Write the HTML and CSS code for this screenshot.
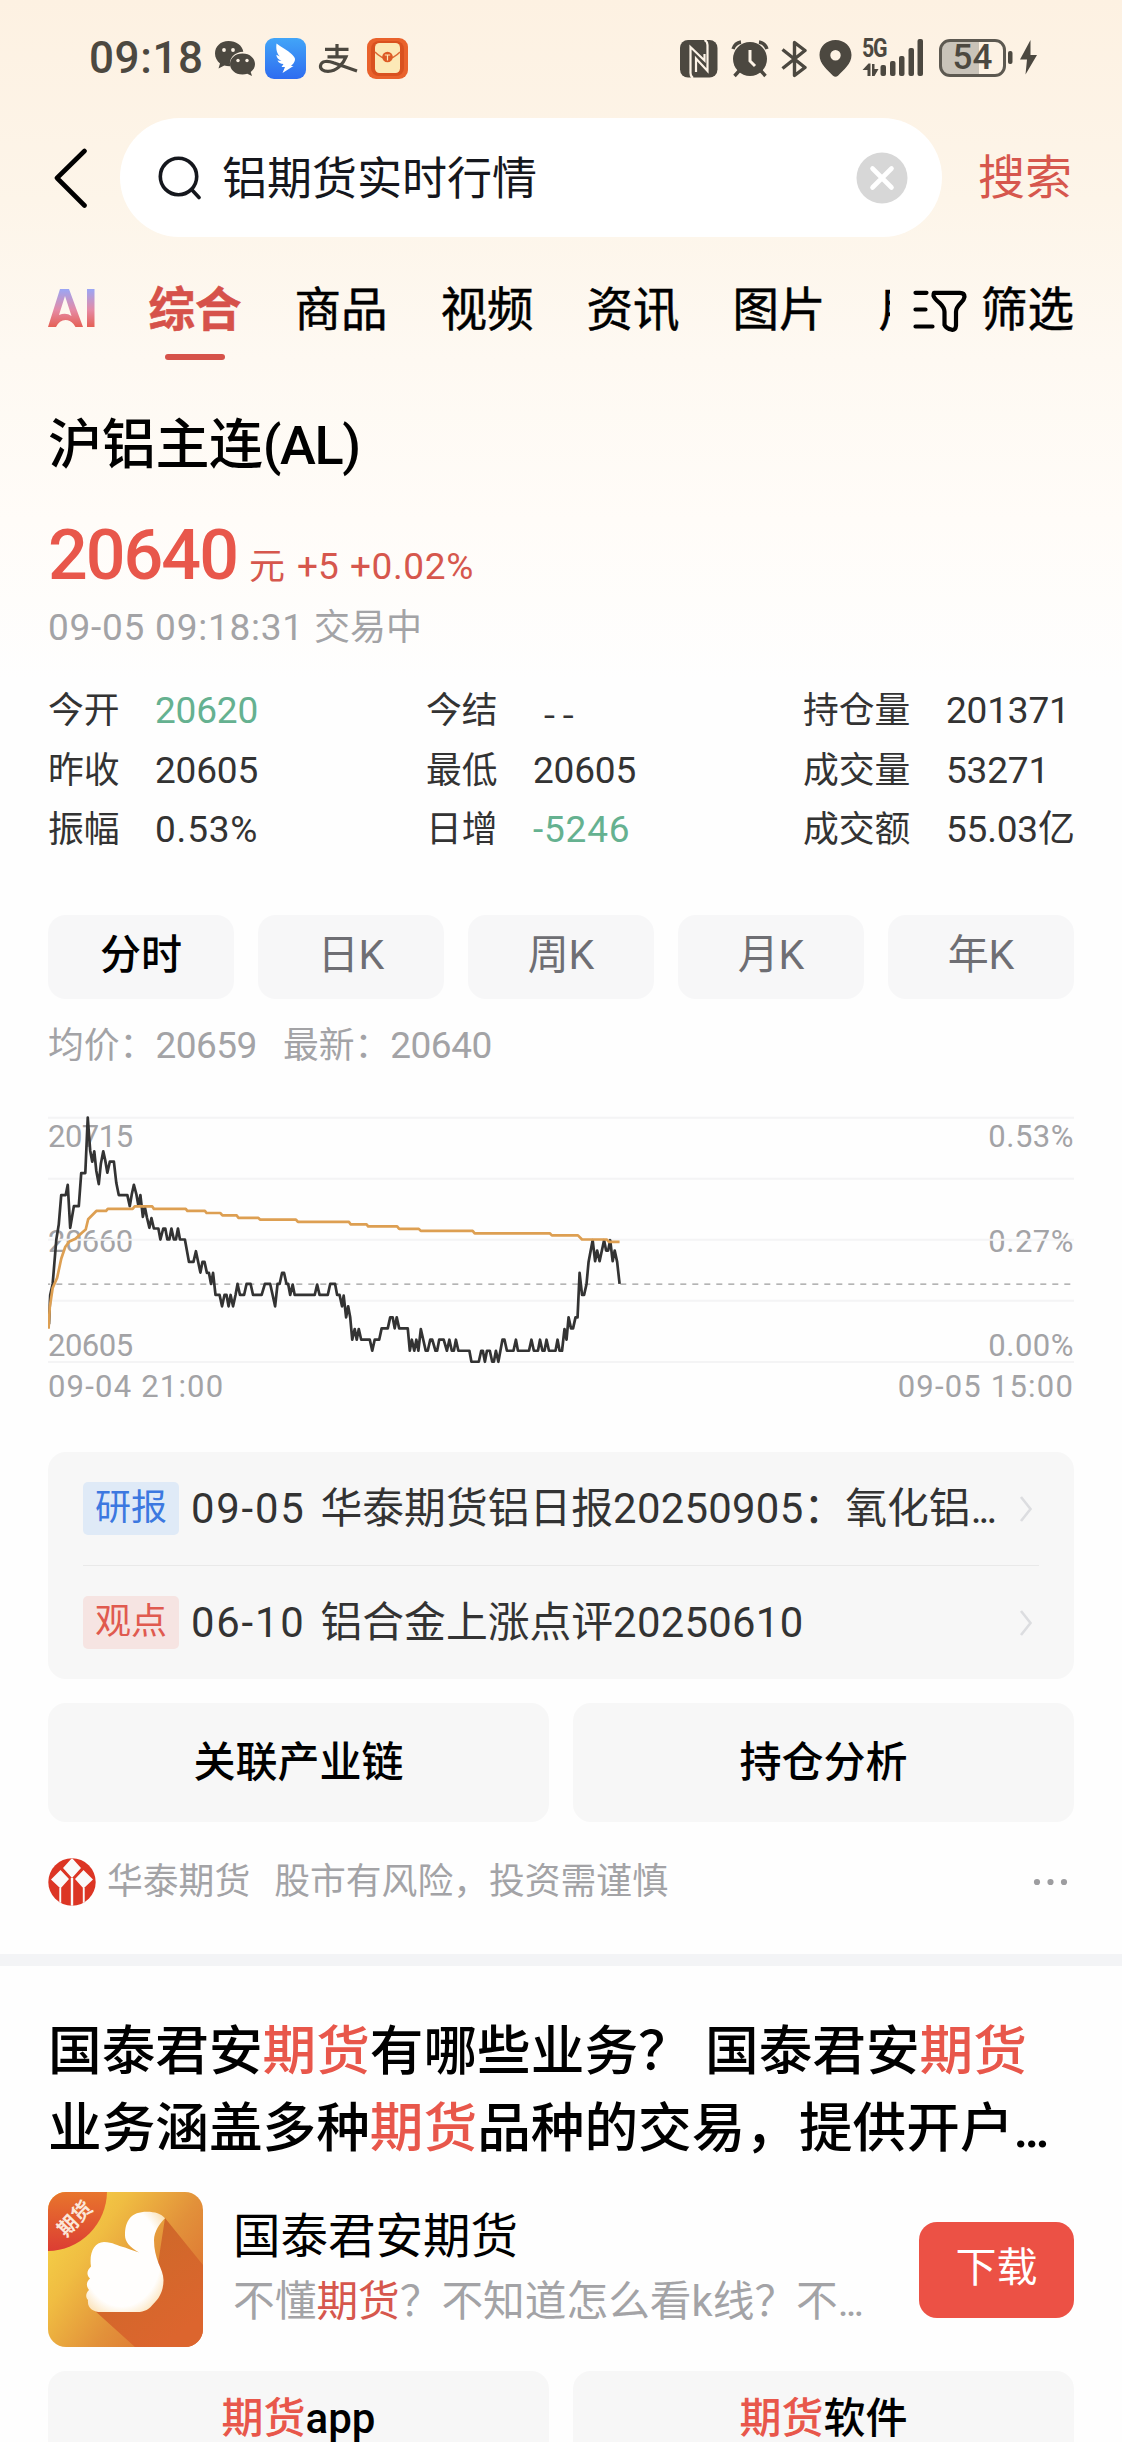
FILE: index.html
```html
<!DOCTYPE html>
<html lang="zh-CN">
<head>
<meta charset="utf-8">
<title>铝期货实时行情</title>
<link rel="stylesheet" href="styles.css">
</head>
<body>
<div class="page">
  <header class="status">
    <div class="status-left">
      <span class="clock">09:18</span>
      <svg class="ic-wechat" width="41" height="38" viewBox="215 39 41 38" fill="#4c4840">
        <path d="M228.500 41C220.500 41 215 46.500 215 53.500c0 4 2 7.500 5 10l-1.500 5 5.800-3c2 .6 4 .9 6 .8-2-8 4.500-14.500 13-14.500C242.500 45.500 236 41 228.500 41z"/>
        <path d="M242.500 53.500c-7.500 0-12.500 5-12.500 10.500s5 10.500 12.500 10.500c1.700 0 3.300-.3 4.800-.8l4.700 2.300-1.300-4c2.800-2 4.300-4.800 4.300-8 0-5.500-5-10.500-12.500-10.500z"/>
        <g fill="#fdf3e6"><circle cx="224" cy="50" r="1.900"/><circle cx="233" cy="50" r="1.900"/><circle cx="238" cy="60.500" r="1.700"/><circle cx="247" cy="60.500" r="1.700"/></g>
      </svg>
      <svg class="ic-wing" width="41" height="41" viewBox="265 38 41 41">
        <defs><linearGradient id="wing" x1="0" y1="0" x2="0" y2="1"><stop offset="0" stop-color="#42a5f8"/><stop offset="1" stop-color="#2e6cf0"/></linearGradient></defs>
        <rect x="265" y="38" width="41" height="41" rx="9" fill="url(#wing)"/>
        <path fill="#fff" d="M276.500 43.500c5 4 11 6.500 15 10.500 2 2 4 4 3.500 6-.5 2.500-2.500 4.500-4 6h2.500L282.500 73l2.500-6h-3.500l2-3c-3 0-5-1.500-6-3.500l4 .5c-3-1.500-5-3.500-5.200-6.300l3.700 1.800c-3-2.500-4.300-7-3.500-13z"/>
      </svg>
      <svg class="ic-pay" width="40" height="30" viewBox="318 43 40 30" fill="none" stroke="#4c4840" stroke-width="3.200">
        <path d="M325 49.300h23.500M337 44v12M327.500 56.800H346c-3 7.500-9.500 14.500-18 14.500-5 0-8-2.500-7.500-5.500.8-5.500 8-5 13-3L357 71"/>
      </svg>
      <svg class="ic-packet" width="41" height="41" viewBox="367 38 41 41">
        <rect x="367" y="38" width="41" height="41" rx="9" fill="#e9622c"/>
        <rect x="371" y="41" width="33" height="35" rx="8" fill="#d9511f"/>
        <rect x="375" y="43" width="25" height="30" rx="4.500" fill="#fce9b7"/>
        <path d="M375 52q12.500 13 25 0" fill="none" stroke="#dc6a35" stroke-width="1.500"/>
        <circle cx="387.500" cy="57" r="5.300" fill="#dd5a25"/>
        <path d="M384.800 55h5.400M387.500 55v5.500" stroke="#fce9b7" stroke-width="1.200"/>
      </svg>
    </div>
    <div class="status-right">
      <svg class="ic-nfc" width="38" height="38" viewBox="680 40 38 38">
        <rect x="680" y="40" width="37.500" height="37.500" rx="8" fill="#4c4840"/>
        <path d="M693 78q-2.500-1.500-2.500-5V47l14 13.500V54M704.500 40q3 1.500 3 5v26L696 58.500V72" fill="none" stroke="#fdf3e6" stroke-width="2.200"/>
      </svg>
      <svg class="ic-alarm" width="38" height="38" viewBox="731 40 38 38" fill="none" stroke="#4c4840" stroke-width="3.400">
        <circle cx="750" cy="59" r="17" fill="#4c4840" stroke="none"/>
        <path d="M733 49q2-6 8-7M767 49q-2-6-8-7M739 71l-4.500 5M761 71l4.500 5"/>
        <path d="M750 50v11l5 5" stroke="#fdf3e6" stroke-width="3"/>
      </svg>
      <svg class="ic-bt" width="26" height="38" viewBox="781 40 26 38" fill="none" stroke="#4c4840" stroke-width="3.400" stroke-linejoin="round">
        <path d="M782.500 49.500L805 67.500l-10.500 8V42.500l10.500 8-22.500 18"/>
      </svg>
      <svg class="ic-pin" width="33" height="37" viewBox="818.500 40 33 37" fill="#4c4840" fill-rule="evenodd">
        <path d="M835 40c-9 0-16 6.500-16 15 0 9 8 15 13.500 20.700q2.500 2 5 0C843 70 851 64 851 55c0-8.500-7-15-16-15zm0 10a5.200 5.200 0 1 1 0 10.400 5.200 5.200 0 0 1 0-10.400z"/>
      </svg>
      <div class="signal">
        <span class="net">5G</span>
        <svg width="62" height="39" viewBox="862 38 62 39" fill="#4c4840">
          <path d="M862.500 70l6-6.500h2V76h-3v-6zM872 64h2.500v5h4l-4 7H872z"/>
          <rect x="880.500" y="65" width="5.500" height="11" rx="2"/><rect x="890" y="61" width="5.500" height="15" rx="2"/><rect x="899" y="56" width="5.500" height="20" rx="2"/><rect x="908.500" y="48" width="5.500" height="28" rx="2"/><rect x="917.500" y="39" width="5.500" height="37" rx="2"/>
        </svg>
      </div>
      <div class="battery"><span>54</span></div>
      <svg class="ic-bolt" width="30" height="36" viewBox="1008 39 30 36" fill="#4c4840">
        <rect x="1008" y="51" width="4.500" height="13" rx="2"/><path d="M1030.500 40L1020 59.500h7L1025.500 74.500 1037 55h-6.500z"/>
      </svg>
    </div>
  </header>

  <div class="searchbar">
    <svg class="back" width="34" height="60" viewBox="54 147 34 60" fill="none" stroke="#000" stroke-width="4.600" stroke-linecap="round" stroke-linejoin="round"><path d="M84.500 150L57 177l27.500 27.500"/></svg>
    <div class="field">
      <svg width="44" height="44" viewBox="158 155 44 44" fill="none" stroke="#15171d" stroke-width="3.600" stroke-linecap="round"><circle cx="178.500" cy="175.500" r="18.200"/><path d="M192.500 189.500l6.500 7"/></svg>
      <span class="query">铝期货实时行情</span>
      <svg class="clear" width="52" height="52" viewBox="0 0 52 52"><circle cx="26" cy="26" r="25.500" fill="#d7d7d7"/><path d="M16.500 16.500l19 19M35.500 16.500l-19 19" stroke="#fff" stroke-width="4.600" stroke-linecap="round"/></svg>
    </div>
    <span class="go">搜索</span>
  </div>

  <nav class="tabs">
    <div class="tablist">
      <svg class="ai" width="48" height="40" viewBox="48 288 48 40" aria-label="AI">
        <defs><linearGradient id="aig" x1="0" y1="0" x2="0" y2="1"><stop offset="0" stop-color="#9aa6f5"/><stop offset=".55" stop-color="#e58ba6"/><stop offset="1" stop-color="#e56055"/></linearGradient></defs>
        <path fill="url(#aig)" d="M48 327l12-38h9L83 327h-7.500l-2-3q-3.500-4-8-4-6 0-9.500 7zM59 315q7-3 12.500 1L65 296zM87 289h7.500v38H87z" fill-rule="evenodd"/>
      </svg>
      <span class="tab active">综合</span><span class="tab">商品</span><span class="tab">视频</span><span class="tab">资讯</span><span class="tab">图片</span><span class="tab">用户</span>
    </div>
    <div class="filter">
      <svg width="54" height="42" viewBox="913 290 54 42" fill="none" stroke="#000" stroke-width="4.200" stroke-linecap="round" stroke-linejoin="round"><path d="M915.500 292.800h11M915.500 309.500h10M915.500 326.500h17M934 292.800h26q4.500 0 4.500 4-.5 3-3.500 6-5 5-5 9v14q-.5 4.500-4 4-6-1.500-7.500-5v-13q0-4-5-9-5-4-6-7 0-2.500.5-3z"/></svg>
      <span>筛选</span>
    </div>
  </nav>

  <section class="quote">
    <h1>沪铝主连<span class="code">(AL)</span></h1>
    <div class="price"><b>20640</b><span class="yuan">元</span><span class="chg">+5</span><span class="pct">+0.02%</span></div>
    <div class="time"><span class="stamp">09-05 09:18:31</span><span>交易中</span></div>
    <div class="stats">
      <div class="stat"><span>今开</span><em class="down">20620</em></div><div class="stat"><span>今结</span><em class="none">--</em></div><div class="stat wide"><span>持仓量</span><em>201371</em></div>
      <div class="stat"><span>昨收</span><em>20605</em></div><div class="stat"><span>最低</span><em>20605</em></div><div class="stat wide"><span>成交量</span><em>53271</em></div>
      <div class="stat"><span>振幅</span><em class="rate">0.53%</em></div><div class="stat"><span>日增</span><em class="down rate">-5246</em></div><div class="stat wide"><span>成交额</span><em>55.03亿</em></div>
    </div>
    <div class="periods"><span class="on">分时</span><span>日K</span><span>周K</span><span>月K</span><span>年K</span></div>
    <div class="legend"><span>均价：<i>20659</i></span><span>最新：<i>20640</i></span></div>
    <div class="chart">
      <div class="scale"><span>20715</span><span>20660</span><span>20605</span></div>
      <div class="scale right"><span>0.53%</span><span>0.27%</span><span>0.00%</span></div>
      <svg width="1026" height="248" viewBox="117.600 685.300 2513.700 720.200" preserveAspectRatio="none" fill="none">
        <g stroke="#f4f4f5" stroke-width="2"><path vector-effect="non-scaling-stroke" d="M117 690.500H2632M117 867.500H2632M117 1044.500H2632M117 1222H2632M117 1399.500H2632"/></g>
        <path vector-effect="non-scaling-stroke" d="M117.600 1173.500H2632" stroke="#9c9c9c" stroke-width="1.300" stroke-dasharray="6 6" stroke-dashoffset="3.700"/>
        <path class="line" vector-effect="non-scaling-stroke" stroke="#333" d="M120 1290L123 1205 129 1173 138 1044 144 1000 150 915 161 915 166 885 172 1010 181 947 193 947 199 851 209 851 215 690 221 786 226 818 231 788 236 845 242 883 247 825 253 788 258 815 263 850 269 818 279 818 285 880 291 915 312 915 318 947 323 912 328 885 334 912 339 945 344 915 350 978 355 950 360 980 366 1010 371 982 377 1012 388 1012 393 1044 400 1012 405 1012 410 1044 415 1044 420 1012 426 1044 431 1044 436 1012 441 1044 453 1044 463 1109 474 1109 480 1078 491 1140 496 1109 501 1109 507 1141 512 1141 517 1173 522 1141 528 1205 538 1205 544 1238 550 1205 555 1205 560 1238 565 1205 571 1238 577 1205 582 1173 588 1205 598 1205 604 1173 614 1173 620 1205 641 1205 649 1173 662 1173 674 1238 680 1173 685 1173 691 1141 696 1141 702 1173 706 1173 711 1205 717 1175 722 1205 771 1205 777 1175 783 1205 803 1205 809 1173 821 1173 826 1205 832 1205 838 1238 842 1207 848 1270 853 1238 858 1270 863 1335 869 1304 874 1335 879 1304 885 1335 906 1335 912 1367 918 1335 929 1335 935 1302 950 1302 956 1270 962 1270 967 1302 972 1270 978 1302 999 1302 1004 1367 1009 1335 1015 1367 1020 1335 1025 1367 1031 1304 1037 1335 1043 1367 1048 1367 1054 1335 1059 1335 1067 1367 1071 1367 1076 1335 1087 1335 1095 1367 1101 1335 1107 1367 1112 1367 1117 1335 1123 1367 1150 1367 1155 1399 1173 1399 1179 1367 1183 1367 1188 1399 1193 1367 1200 1367 1206 1399 1210 1399 1215 1367 1221 1399 1231 1335 1236 1335 1242 1367 1258 1367 1264 1335 1269 1367 1296 1367 1302 1335 1308 1367 1318 1367 1323 1335 1329 1367 1334 1367 1339 1335 1345 1367 1361 1367 1366 1335 1371 1367 1377 1367 1383 1304 1388 1335 1393 1270 1399 1302 1404 1302 1410 1270 1415 1270 1420 1141 1426 1205 1431 1205 1437 1173 1442 1109 1452 1046 1458 1107 1463 1076 1469 1107 1480 1046 1485 1076 1490 1076 1495 1046 1501 1107 1506 1076 1512 1109 1518 1173"/>
        <path class="line" vector-effect="non-scaling-stroke" stroke="#dd9f52" d="M119 1303L122 1240 129 1185 140 1155 150 1100 160 1065 170 1050 185 1042 200 1025 210 1015 216 985 236 961 260 961 264 955 325 955 330 948 373 948 377 955 455 955 459 961 502 961 506 967 540 967 545 974 580 974 584 981 633 981 637 986 725 986 730 993 855 993 859 1000 898 1000 902 1006 973 1006 978 1013 1026 1013 1031 1019 1158 1019 1163 1026 1347 1026 1352 1032 1416 1032 1426 1044 1487 1044 1492 1051 1518 1051"/>
      </svg>
    </div>
    <div class="axis"><span>09-04 21:00</span><span>09-05 15:00</span></div>
    <div class="reports">
      <div class="report"><span class="tag blue">研报</span><p><i class="d">09-05</i>华泰期货铝日报<i>20250905</i>：氧化铝<i class="dots">...</i></p><svg width="14" height="28" viewBox="0 0 14 28"><path d="M2 2l9.500 12L2 26"/></svg></div>
      <div class="report"><span class="tag red">观点</span><p><i class="d">06-10</i>铝合金上涨点评<i>20250610</i></p><svg width="14" height="28" viewBox="0 0 14 28"><path d="M2 2l9.500 12L2 26"/></svg></div>
    </div>
    <div class="pair"><span>关联产业链</span><span>持仓分析</span></div>
    <div class="source">
      <svg class="logo" width="48" height="48" viewBox="0 0 48 48"><defs><clipPath id="lc"><circle cx="24" cy="24" r="23.700"/></clipPath></defs><g clip-path="url(#lc)"><path fill="#dc3524" d="M0 0h48v48H0z"/><g fill="#fafafa"><path d="M24 0l9 10-9 10-9-10zM12.500 12l8.500 9-8.500 9.500L3 21.500zM35.500 12l9.500 9.500-9.500 9L27 21z"/><path d="M22.800 20h2.400v28h-2.400zM11.300 30h1.900v18h-1.900zM34.800 30h1.900v18h-1.900z"/></g></g></svg>
      <span class="org">华泰期货</span><span>股市有风险，投资需谨慎</span>
      <svg class="more" width="36" height="8" viewBox="0 0 36 8" fill="#9d9da0"><circle cx="5" cy="4" r="3.100"/><circle cx="18.500" cy="4" r="3.100"/><circle cx="32" cy="4" r="3.100"/></svg>
    </div>
  </section>

  <section class="promo">
    <h2>国泰君安<mark>期货</mark>有哪些业务？<span class="sp"> </span>国泰君安<mark>期货</mark><br>业务涵盖多种<mark>期货</mark>品种的交易，提供开户<span class="dots">...</span></h2>
    <div class="app">
      <svg class="appicon" width="155" height="155" viewBox="0 0 155 155">
        <defs>
          <linearGradient id="ag" x1="0" y1=".15" x2="1" y2=".85"><stop offset="0" stop-color="#f6d448"/><stop offset=".28" stop-color="#f0bd42"/><stop offset=".6" stop-color="#e2913a"/><stop offset="1" stop-color="#dd6a30"/></linearGradient>
          <linearGradient id="sh" x1="0" y1="0" x2=".6" y2="1"><stop offset="0" stop-color="#c96a27"/><stop offset="1" stop-color="#dc652e"/></linearGradient>
          <linearGradient id="bd" x1="0" y1="0" x2="0" y2="1"><stop offset=".5" stop-color="#e8762c"/><stop offset="1" stop-color="#dc3d33"/></linearGradient>
          <radialGradient id="th" cx=".45" cy=".45" r=".66"><stop offset=".75" stop-color="#fffefd"/><stop offset="1" stop-color="#fbe2b8"/></radialGradient>
          <clipPath id="ac"><rect width="155" height="155" rx="18"/></clipPath>
        </defs>
        <g clip-path="url(#ac)">
          <path fill="url(#ag)" d="M0 0h155v155H0z"/>
          <path fill="url(#sh)" d="M117 26l38 47v82H87L46 118l60-20z"/>
          <circle cx="-1" cy="-1" r="60" fill="url(#bd)"/>
          <path fill="url(#th)" d="M99 19.700c8 0 14 2 18 6.500-5 5-11 13-11 22 0 9 2 16 4.500 23 2.500 6 5 11 5 17 0 10-4 18-9.500 23-5 6-9 8.800-17 8.800H53c-8 0-14-4-13-12-3-3-2-7 1-10-3-4-3-8 1-11.500-4-4-3-8 1-12-2-13 3-24.500 13-24.500 9 0 13 4 21 5.500 4 1.500 9 3.500 14 5-9-5-14-11-14-17 0-15 6-23.800 22-23.800z"/>
          <text x="0" y="0" transform="translate(18 46) rotate(-46)" class="ribbon">期货</text>
        </g>
      </svg>
      <div class="info"><div class="name">国泰君安期货</div><div class="desc">不懂<mark>期货</mark>？不知道怎么看k线？不<span class="dots">...</span></div></div>
      <span class="download">下载</span>
    </div>
    <div class="pair links"><span><mark>期货</mark>app</span><span><mark>期货</mark>软件</span></div>
  </section>
</div>
</body>
</html>
```
FILE: styles.css
```css
* { box-sizing: border-box; margin: 0; padding: 0; }
html, body { height: 2442px; overflow: hidden; }
body { font-family: Roboto, "Noto Sans CJK SC", sans-serif; color: #000; background: #fefefe; }
svg { display: block; flex: none; }
i, em { font-style: normal; }
mark { background: none; color: #e8574b; }
.page {
  width: 1122px; height: 2442px; overflow: hidden; white-space: nowrap;
  background: linear-gradient(#fdf1e2 0, #fdf5e9 200px, #fef9f2 360px, #fffcf8 520px, #fefefe 680px);
}

.status { height: 118px; display: flex; justify-content: space-between; padding: 38px 84px 0 89px; }
.status-left, .status-right { display: flex; align-items: flex-start; }
.clock { width: 114px; font-size: 44px; font-weight: 500; line-height: 41px; letter-spacing: 0.6px; color: #4c4840; }
.ic-wechat { margin: 1px 9px 0 12px; }
.ic-pay { margin: 5px 9px 0 12px; }
.ic-nfc { margin: 2px 13px 0 0; }
.ic-alarm { margin: 2px 12px 0 0; }
.ic-bt { margin: 2px 11.500px 0 0; }
.ic-pin { margin: 2px 10.500px 0 0; }
.signal { position: relative; margin-right: 15px; }
.net { position: absolute; left: 0; top: 0; font-size: 26px; line-height: 20px; font-weight: 700; letter-spacing: -1.500px; transform: scaleX(.82); transform-origin: left; color: #4c4840; }
.battery { width: 67px; height: 38px; margin: 1px 2px 0 0; border: 3.500px solid #5d5951; border-radius: 11px; background: linear-gradient(90deg, #c9c3b9 60%, transparent 60%); text-align: center; font-size: 35px; line-height: 31px; font-weight: 500; color: #4c4840; }
.ic-bolt { margin-top: 1px; }

.searchbar { height: 119px; display: flex; align-items: center; padding-left: 54px; }
.field { width: 822px; height: 119px; margin-left: 32px; border-radius: 60px; background: #fff; display: flex; align-items: center; padding: 0 34px 0 38px; }
.query { flex: 1; margin-left: 20px; font-size: 45px; line-height: 60px; padding-top: 4px; color: #15171d; }
.go { margin-left: 36px; font-size: 47px; line-height: 60px; color: #d6574d; }

.tabs { height: 145px; display: flex; padding: 37px 48px 0 48px; font-size: 46.500px; line-height: 72px; }
.tablist { width: 842px; flex: none; display: flex; overflow: hidden; }
.ai { margin: 14px 52.500px 0 0; }
.tab { position: relative; width: 93px; margin-right: 53px; flex: none; -webkit-text-stroke: .5px currentColor; }
.active { color: #d6524a; font-weight: 700; }
.active::after { content: ""; position: absolute; left: 16px; top: 80px; width: 60px; height: 6px; border-radius: 3px; background: #d6524a; }
.filter { display: flex; margin-left: 23px; gap: 14px; -webkit-text-stroke: .5px currentColor; }
.filter svg { margin-top: 16px; }

.quote { padding: 0 48px; }
h1 { font-size: 54px; line-height: 80px; font-weight: 500; padding-top: 24px; letter-spacing: -.3px; }
.code { letter-spacing: -1.400px; }
.price { display: flex; align-items: baseline; height: 80px; margin-top: 29px; line-height: 80px; color: #d6574d; font-size: 37px; }
.price b { font-size: 70px; font-weight: 500; letter-spacing: -2px; color: #e8574b; width: 201px; }
.yuan { width: 48px; font-size: 36px; }
.chg { width: 53px; }
.pct { letter-spacing: .6px; }
.time { display: flex; gap: 14px; height: 44px; line-height: 44px; margin-top: 11px; font-size: 36px; color: #a3a3a6; }
.stamp { font-size: 37px; letter-spacing: .75px; width: 252px; }
.stats { display: grid; grid-template-columns: 378px 377px 271px; grid-auto-rows: 59.700px; line-height: 60px; margin-top: 31px; font-size: 35.800px; color: #333; }
.stat { display: flex; }
.stat span { width: 107px; flex: none; }
.stat.wide span { width: 143px; }
.stat em { font-size: 37px; letter-spacing: -.2px; }
.stat .rate { letter-spacing: .8px; }
.stat .down { color: #65b190; }
.stat .none { padding-left: 10px; letter-spacing: 6px; font-family: "Noto Sans CJK SC", sans-serif; }
.periods { display: grid; grid-template-columns: repeat(5, 1fr); gap: 24px; margin-top: 55px; }
.periods span { height: 84px; border-radius: 18px; background: #f7f7f8; text-align: center; line-height: 80px; font-size: 41px; color: #6e6e73; }
.periods .on { color: #000; font-weight: 500; }
.legend { display: flex; gap: 26px; height: 50px; line-height: 50px; margin-top: 22px; font-size: 35.800px; color: #a3a3a6; }
.legend i { font-size: 37px; letter-spacing: -.5px; }
.chart { position: relative; height: 248px; margin-top: 45px; }
.chart svg { position: relative; }
.line { stroke-width: 2.700px; stroke-linejoin: round; }
.scale { position: absolute; inset: 0 auto 0 0; padding: 3px 0 0; display: flex; flex-direction: column; justify-content: space-between; font-size: 31px; line-height: 36px; letter-spacing: -.5px; color: #a3a3a6; }
.scale.right { inset: 0 0 0 auto; letter-spacing: .5px; }
.axis { display: flex; justify-content: space-between; font-size: 31px; line-height: 36px; margin-top: 5px; letter-spacing: 1.200px; color: #a3a3a6; }
.reports { height: 227px; margin-top: 47px; padding: 0 35px; border-radius: 18px; background: #f7f7f7; color: #333; font-size: 41.800px; }
.report { height: 113px; display: flex; align-items: center; }
.report + .report { height: 114px; border-top: 1px solid #e9e9e9; }
.tag { width: 96px; height: 53px; border-radius: 5px; text-align: center; font-size: 36px; line-height: 53px; flex: none; }
.blue { background: #dfeaf7; color: #3c78e0; }
.red { background: #f6e4e2; color: #e05a4f; }
.report p { margin-left: 12px; flex: 1; line-height: 60px; }
.report p i { letter-spacing: .3px; }
.report p .d { display: inline-block; width: 129.500px; letter-spacing: 1.800px; }
.report svg { margin-right: 6px; fill: none; stroke: #dcdde0; stroke-width: 2.600; }
.dots, .report p .dots { letter-spacing: -.075em; }
.pair { display: grid; grid-template-columns: 1fr 1fr; gap: 24px; margin-top: 24px; }
.pair span { height: 119px; border-radius: 18px; background: #f7f7f7; text-align: center; font-size: 42px; line-height: 119px; font-weight: 500; }
.source { display: flex; align-items: center; height: 60px; line-height: 60px; margin-top: 30px; font-size: 35.800px; color: #a3a3a6; }
.org { margin: 0 24px 0 11px; }
.more { margin-left: auto; margin-right: 6px; }

.promo { margin-top: 42px; border-top: 12px solid #f3f4f6; padding: 47px 48px 0; }
h2 { font-size: 53.650px; line-height: 77px; font-weight: 500; }
.app { display: flex; align-items: center; margin-top: 25px; height: 155px; }
.ribbon { font-size: 20px; font-weight: 700; fill: #fbe6d8; }
.info { flex: 1; margin-left: 30px; }
.name { font-size: 47.500px; line-height: 66px; margin-top: -2px; }
.desc { font-size: 41.700px; line-height: 64px; color: #a3a3a6; }
.desc mark { color: #d6574d; }
.download { width: 155px; height: 96px; border-radius: 18px; background: #ec5145; color: #fff; text-align: center; font-size: 41px; line-height: 92px; }
.links mark, .links span { line-height: 96px; }
```
